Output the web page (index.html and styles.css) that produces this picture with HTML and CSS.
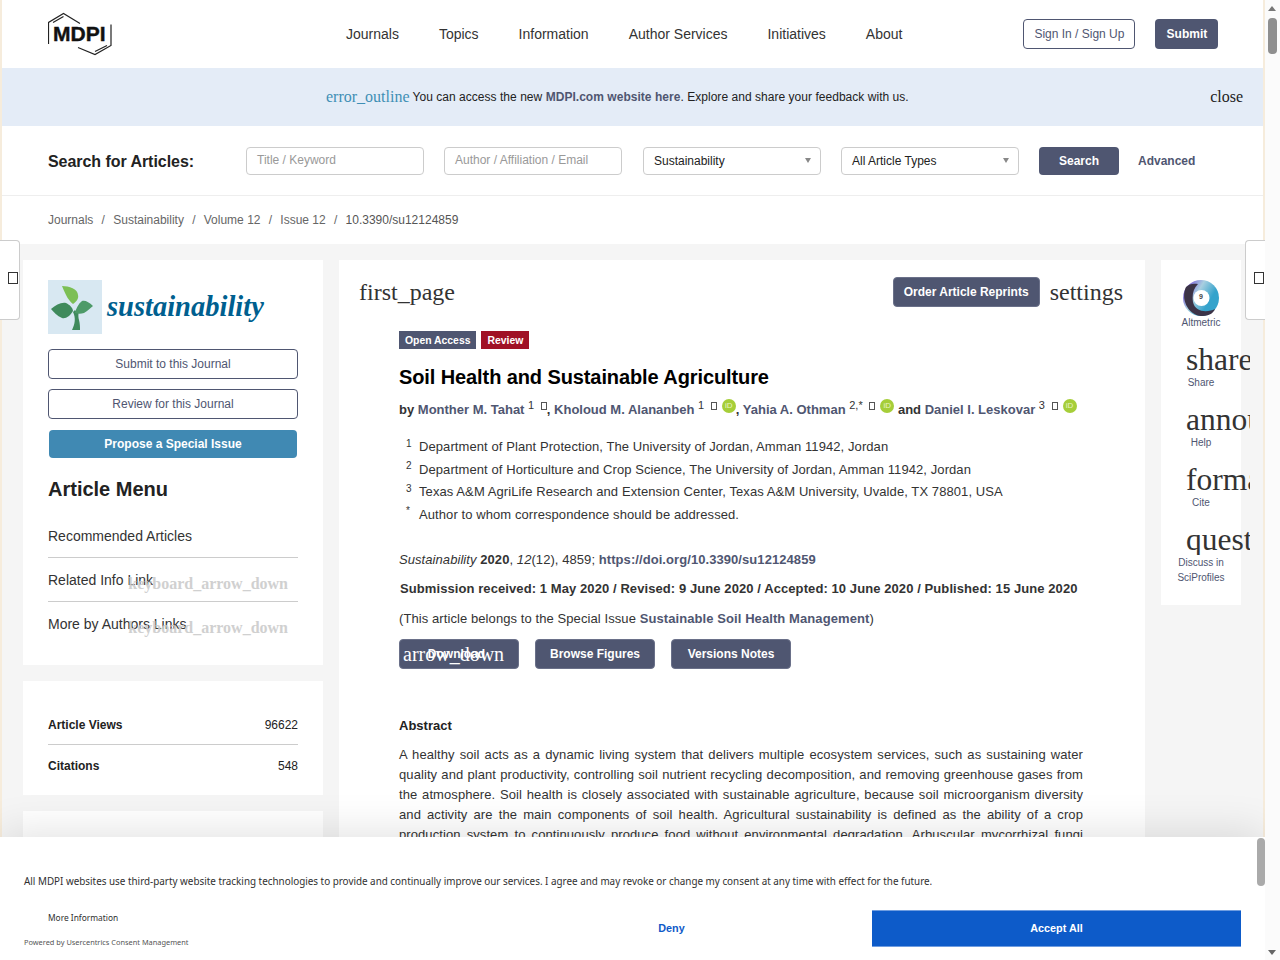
FILE: index.html
```html
<!DOCTYPE html>
<html lang="en">
<head>
    <meta charset="UTF-8">
    <title>Soil Health and Sustainable Agriculture</title>
    <link rel="stylesheet" href="styles.css">
</head>
<body>
    <div class="page">
        <header class="top-bar">
            <svg class="mdpi-logo" width="66" height="44" viewBox="0 0 66 44" aria-hidden="true">
                <path d="M0.500 32 V10.500 L15.500 1.500 L32 11.500 M5 10.500 L15.500 4.500 M63 12.500 V33.500 L47 42.500 L30 35.500 M59 33.500 L47 39.500" fill="none" stroke="#222" stroke-width="1.200"/>
                <text x="5" y="29" class="mdpi-text">MDPI</text>
            </svg>
            <nav class="main-nav">
                <a>Journals</a>
                <a>Topics</a>
                <a>Information</a>
                <a>Author Services</a>
                <a>Initiatives</a>
                <a>About</a>
            </nav>
            <a class="btn btn-outline sign-in">Sign In / Sign Up</a>
            <a class="btn btn-dark submit">Submit</a>
        </header>

        <div class="notice">
            <span class="icon-word notice-icon">error_outline</span>
            <span class="notice-text">You can access the new <b>MDPI.com website here</b>. Explore and share your feedback with us.</span>
            <span class="icon-word notice-close">close</span>
        </div>

        <form class="search-bar">
            <strong class="search-title">Search for Articles:</strong>
            <div class="field placeholder">Title / Keyword</div>
            <div class="field placeholder wide-gap">Author / Affiliation / Email</div>
            <div class="field select">Sustainability</div>
            <div class="field select">All Article Types</div>
            <a class="btn btn-dark search-btn">Search</a>
            <a class="advanced">Advanced</a>
        </form>

        <div class="breadcrumb">
            <a>Journals</a><i>/</i><a>Sustainability</a><i>/</i><a>Volume 12</a><i>/</i><a>Issue 12</a><i>/</i><span>10.3390/su12124859</span>
        </div>

        <main class="content">
            <aside class="left-col">
                <section class="card journal-card">
                    <div class="journal-logo">
                        <svg width="54" height="54" viewBox="0 0 54 54" aria-hidden="true">
                            <rect width="54" height="54" fill="#d8e8f2"/>
                            <path d="M24 50 C27 44 28 38 25 32 L27 30 C29 33 29 31 31 27 L33 27 C30 32 30 36 31 40 C32 44 32 47 32 50 Z" fill="#3f8a5c"/>
                            <path d="M14 6 C21 6 30 9 30 15 C31 19 28 22 25 24 C21 21 18 16 14 6 Z" fill="#7cbf55"/>
                            <path d="M3 29 C8 25 13 22 18 23 C22 25 25 28 25 31 C22 36 18 39 14 38 C9 36 6 32 3 29 Z" fill="#3f8a5c"/>
                            <path d="M45 26 C41 22 37 20 34 21 C30 24 28 29 27 33 C30 34 33 34 36 33 C40 31 42 28 45 26 Z" fill="#4d9a68"/>
                        </svg>
                        <span class="journal-name">sustainability</span>
                    </div>
                    <a class="btn btn-outline journal-btn">Submit to this Journal</a>
                    <a class="btn btn-outline journal-btn">Review for this Journal</a>
                    <a class="btn special-btn">Propose a Special Issue</a>
                    <h2 class="menu-title">Article Menu</h2>
                    <ul class="article-menu">
                        <li>Recommended Articles</li>
                        <li>Related Info Link<span class="icon-word menu-arrow">keyboard_arrow_down</span></li>
                        <li>More by Authors Links<span class="icon-word menu-arrow">keyboard_arrow_down</span></li>
                    </ul>
                </section>
                <section class="card stats-card">
                    <div class="stat-row"><b>Article Views</b><span>96622</span></div>
                    <div class="stat-row"><b>Citations</b><span>548</span></div>
                </section>
                <section class="card empty-card"></section>
            </aside>

            <article class="card article">
                <div class="article-tools">
                    <span class="icon-word tool-icon">first_page</span>
                    <a class="btn btn-dark reprints">Order Article Reprints</a>
                    <span class="icon-word tool-icon">settings</span>
                </div>
                <div class="article-body">
                    <div class="badges">
                        <span class="badge badge-access">Open Access</span>
                        <span class="badge badge-type">Review</span>
                    </div>
                    <h1 class="title">Soil Health and Sustainable Agriculture</h1>
                    <div class="authors">
                        by <a>Monther M. Tahat</a> <sup>1</sup> <span class="tofu"></span>, <a>Kholoud M. Alananbeh</a> <sup>1</sup> <span class="tofu"></span><span class="orcid">iD</span>, <a>Yahia A. Othman</a> <sup>2,*</sup> <span class="tofu"></span><span class="orcid">iD</span> and <a>Daniel I. Leskovar</a> <sup>3</sup> <span class="tofu"></span><span class="orcid">iD</span>
                    </div>
                    <div class="affiliations">
                        <div class="aff"><sup>1</sup><span>Department of Plant Protection, The University of Jordan, Amman 11942, Jordan</span></div>
                        <div class="aff"><sup>2</sup><span>Department of Horticulture and Crop Science, The University of Jordan, Amman 11942, Jordan</span></div>
                        <div class="aff"><sup>3</sup><span>Texas A&amp;M AgriLife Research and Extension Center, Texas A&amp;M University, Uvalde, TX 78801, USA</span></div>
                        <div class="aff"><sup>*</sup><span>Author to whom correspondence should be addressed.</span></div>
                    </div>
                    <p class="citation"><em>Sustainability</em> <b>2020</b>, <em>12</em>(12), 4859; <a>https://doi.org/10.3390/su12124859</a></p>
                    <p class="dates">Submission received: 1 May 2020 / Revised: 9 June 2020 / Accepted: 10 June 2020 / Published: 15 June 2020</p>
                    <p class="belongs">(This article belongs to the Special Issue <a>Sustainable Soil Health Management</a>)</p>
                    <div class="article-btns">
                        <a class="btn btn-dark article-btn download"><span class="icon-word download-icon">arrow_down</span>Download</a>
                        <a class="btn btn-dark article-btn">Browse Figures</a>
                        <a class="btn btn-dark article-btn">Versions Notes</a>
                    </div>
                    <h3 class="abstract-title">Abstract</h3>
                    <p class="abstract">A healthy soil acts as a dynamic living system that delivers multiple ecosystem services, such as sustaining water quality and plant productivity, controlling soil nutrient recycling decomposition, and removing greenhouse gases from the atmosphere. Soil health is closely associated with sustainable agriculture, because soil microorganism diversity and activity are the main components of soil health. Agricultural sustainability is defined as the ability of a crop production system to continuously produce food without environmental degradation. Arbuscular mycorrhizal fungi</p>
                </div>
            </article>

            <aside class="card right-col">
                <div class="side-item altmetric">
                    <svg width="36" height="36" viewBox="0 0 36 36" aria-hidden="true">
                        <defs>
                            <linearGradient id="ringTop" x1="0" y1="0" x2="1" y2="0.6">
                                <stop offset="0" stop-color="#6a2fd8"/>
                                <stop offset="0.450" stop-color="#a9cfe0"/>
                                <stop offset="0.800" stop-color="#35a3cc"/>
                            </linearGradient>
                        </defs>
                        <circle cx="18" cy="18" r="18" fill="url(#ringTop)"/>
                        <path d="M3 7 C-3 20 6 36 20 36 C27 36 31 32 32 29 C24 33 12 32 10 22 C9 15 10 9 15 4 C10 3 6 4 3 7 Z" fill="#3c3347"/>
                        <circle cx="18.500" cy="18" r="8" fill="#fff"/>
                    </svg>
                    <span class="altmetric-score">9</span>
                    <label>Altmetric</label>
                </div>
                <div class="side-item"><span class="icon-word side-icon">share</span><label>Share</label></div>
                <div class="side-item"><span class="icon-word side-icon">announcement</span><label>Help</label></div>
                <div class="side-item"><span class="icon-word side-icon">format_quote</span><label>Cite</label></div>
                <div class="side-item"><span class="icon-word side-icon">question_answer</span><label>Discuss in<br>SciProfiles</label></div>
            </aside>
        </main>
    </div>

    <div class="side-tab tab-left"><span class="tofu tofu-big"></span></div>
    <div class="side-tab tab-right"><span class="tofu tofu-big"></span></div>

    <div class="cookie">
        <p class="cookie-text">All MDPI websites use third-party website tracking technologies to provide and continually improve our services. I agree and may revoke or change my consent at any time with effect for the future.</p>
        <div class="cookie-row">
            <div class="cookie-links">
                <a class="more-info">More Information</a>
                <span class="powered">Powered by Usercentrics Consent Management</span>
            </div>
            <a class="deny">Deny</a>
            <a class="accept">Accept All</a>
        </div>
        <div class="cookie-thumb"></div>
    </div>

    <div class="scrollbar">
        <span class="arrow-up"></span>
        <span class="thumb"></span>
        <span class="arrow-down"></span>
    </div>
</body>
</html>
```

FILE: styles.css
```css
:root {
    --dark-btn: #4f5671;
    --text: #222;
    --line: #ccc;
    --grey-bg: #f5f5f5;
}

* {
    margin: 0;
    padding: 0;
    box-sizing: border-box;
}

html, body {
    height: 960px;
    overflow: hidden;
}

body {
    font-family: "Liberation Sans", Arial, sans-serif;
    font-size: 12px;
    color: var(--text);
    background: #fff;
    position: relative;
}

a {
    color: inherit;
    text-decoration: none;
}

.page {
    width: 1265px;
    height: 960px;
    padding: 0 2px;
    background: #f6ecdc;
    overflow: hidden;
}

/* words left behind by the icon font that did not load */
.icon-word {
    font-family: "Liberation Serif", "Times New Roman", serif;
    font-weight: normal;
}

.btn {
    display: flex;
    align-items: center;
    justify-content: center;
    height: 30px;
    border-radius: 4px;
    font-size: 12px;
}

.btn-dark {
    background: var(--dark-btn);
    color: #fff;
    font-weight: bold;
    border: 1px solid #6a7089;
}

.btn-outline {
    background: #fff;
    color: var(--dark-btn);
    border: 1px solid var(--dark-btn);
}

/* header */
.top-bar {
    display: flex;
    align-items: center;
    height: 68px;
    padding-left: 46px;
    background: #fff;
}

.mdpi-logo {
    flex: none;
    margin-top: -1px;
}

.mdpi-text {
    font-family: "Liberation Sans", Arial, sans-serif;
    font-weight: bold;
    font-size: 21px;
    fill: #111;
    stroke: #111;
    stroke-width: 0.400px;
}

.main-nav {
    display: flex;
    gap: 40px;
    margin-left: 232px;
    font-size: 14px;
    color: #333;
}

.sign-in {
    width: 112px;
    margin-left: 121px;
}

.submit {
    width: 63px;
    margin-left: 20px;
    border: 0;
}

/* notice */
.notice {
    display: flex;
    align-items: center;
    position: relative;
    height: 58px;
    padding-left: 324px;
    background: #e4ecf7;
}

.notice-icon {
    font-size: 16px;
    color: #3f8fb5;
    margin-right: 3px;
}

.notice-text {
    color: #222;
    letter-spacing: 0.035px;
}

.notice-text b {
    color: #4f5671;
}

.notice-close {
    margin-left: auto;
    margin-right: 20px;
    font-size: 16px;
    color: #222;
}

/* search */
.search-bar {
    display: flex;
    align-items: center;
    height: 70px;
    padding: 1px 0 0 46px;
    background: #fff;
    border-bottom: 1px solid #eee;
}

.search-title {
    width: 198px;
    padding-top: 2px;
    font-size: 16px;
    letter-spacing: -0.050px;
    color: #222;
}

.field {
    display: flex;
    align-items: center;
    flex: none;
    width: 178px;
    height: 28px;
    margin-right: 20px;
    padding-left: 10px;
    background: #fff;
    border: 1px solid var(--line);
    border-radius: 4px;
    position: relative;
}

.wide-gap {
    margin-right: 21px;
}

.placeholder {
    color: #999;
    padding-bottom: 2px;
}

.select {
    color: #222;
}

.select::after {
    content: "";
    position: absolute;
    right: 9px;
    top: 10px;
    border-left: 3.500px solid transparent;
    border-right: 3.500px solid transparent;
    border-top: 5px solid #888;
}

.search-btn {
    width: 80px;
    height: 28px;
    border: 0;
}

.advanced {
    margin-left: 19px;
    font-weight: bold;
    color: var(--dark-btn);
}

/* breadcrumb */
.breadcrumb {
    display: flex;
    align-items: center;
    height: 48px;
    padding-left: 46px;
    background: #fff;
    color: #666;
}

.breadcrumb i {
    font-style: normal;
    margin: 0 8.250px;
}

.breadcrumb span {
    color: #555;
}

/* main columns */
.content {
    display: flex;
    align-items: flex-start;
    gap: 16px;
    height: 716px;
    padding: 16px 22px 0 21px;
    background: var(--grey-bg);
}

.card {
    background: #fff;
}

.left-col {
    display: flex;
    flex-direction: column;
    gap: 16px;
    flex: none;
    width: 300px;
}

.journal-card {
    height: 405px;
    padding: 20px 25px 0;
}

.journal-logo {
    display: flex;
    align-items: center;
    gap: 5px;
    height: 54px;
    margin-bottom: 15px;
}

.journal-name {
    font-family: "Liberation Serif", "Times New Roman", serif;
    font-style: italic;
    font-weight: bold;
    font-size: 28.500px;
    color: #005f8f;
}

.journal-btn {
    margin-bottom: 10px;
}

.special-btn {
    width: 248px;
    height: 28px;
    margin: 11px 0 0 1px;
    background: #4089b3;
    color: #fff;
    font-weight: bold;
}

.menu-title {
    margin-top: 19px;
    font-size: 20px;
    line-height: 24px;
    color: #222;
}

.article-menu {
    list-style: none;
    margin-top: 13px;
    font-size: 14px;
    color: #333;
}

.article-menu li {
    display: flex;
    align-items: center;
    position: relative;
    height: 44px;
    border-bottom: 1px solid var(--line);
}

.article-menu li:last-child {
    border-bottom: 0;
}

.menu-arrow {
    position: absolute;
    right: 10px;
    top: 17px;
    font-size: 16px;
    font-weight: bold;
    color: #ccc;
    opacity: 0.9;
}

.stats-card {
    height: 114px;
    padding: 23px 25px 0;
}

.stat-row {
    display: flex;
    justify-content: space-between;
    align-items: center;
    height: 41px;
    color: #222;
}

.stat-row:first-child {
    padding-top: 2px;
    border-bottom: 1px solid var(--line);
}

.empty-card {
    height: 200px;
}

/* article */
.article {
    flex: none;
    width: 806px;
    height: 700px;
    padding: 17px 22px 0 20px;
}

.article-tools {
    display: flex;
    align-items: center;
    height: 30px;
}

.tool-icon {
    font-size: 24px;
    color: #333;
}

.reprints {
    width: 147px;
    margin-left: auto;
    margin-right: 10px;
}

.article-body {
    padding: 24px 40px 0 40px;
    font-size: 13px;
}

.badges {
    display: flex;
    gap: 5px;
    height: 18px;
}

.badge {
    display: flex;
    align-items: center;
    padding: 0 6px;
    font-size: 10.400px;
    font-weight: bold;
    color: #fff;
}

.badge-access {
    background: var(--dark-btn);
}

.badge-type {
    background: #a01125;
}

.title {
    margin-top: 16px;
    font-size: 20px;
    line-height: 24px;
    letter-spacing: -0.100px;
    color: #000;
}

.authors {
    margin-top: 10px;
    height: 24px;
    line-height: 18px;
    font-weight: bold;
    color: #333;
    white-space: nowrap;
}

.authors a {
    color: var(--dark-btn);
}

.authors sup {
    font-size: 11px;
    font-weight: normal;
    line-height: 0;
}

.tofu {
    display: inline-block;
    width: 6px;
    height: 8px;
    margin-left: 3px;
    border: 1px solid #555;
    vertical-align: 4px;
}

.orcid {
    display: inline-block;
    width: 14px;
    height: 14px;
    margin-left: 5px;
    border-radius: 50%;
    background: #a6ce39;
    color: #e8f3c6;
    font-size: 8px;
    font-weight: normal;
    line-height: 14px;
    text-align: center;
    vertical-align: 6px;
}

.affiliations {
    margin-top: 12.500px;
    letter-spacing: 0.085px;
}

.aff {
    display: flex;
    height: 22.500px;
    align-items: center;
    color: #333;
}

.aff sup {
    width: 20px;
    padding-left: 7px;
    font-size: 10px;
    line-height: 0;
    margin-top: -6px;
    letter-spacing: 0;
}

.citation {
    margin-top: 25.500px;
    line-height: 18px;
    color: #333;
    letter-spacing: 0.070px;
}

.citation a {
    font-weight: bold;
    color: var(--dark-btn);
}

.dates {
    margin-top: 11px;
    line-height: 18px;
    font-weight: bold;
    color: #333;
    padding-left: 1px;
    letter-spacing: 0.085px;
}

.belongs {
    margin-top: 12px;
    line-height: 18px;
    color: #333;
    letter-spacing: 0.085px;
}

.belongs a {
    font-weight: bold;
    color: var(--dark-btn);
}

.article-btns {
    display: flex;
    gap: 16px;
    margin-top: 11px;
}

.article-btn {
    width: 120px;
}

.download {
    position: relative;
    padding-right: 5px;
}

.download-icon {
    position: absolute;
    left: 3px;
    top: 1px;
    font-size: 20px;
    line-height: 26px;
}

.abstract-title {
    margin-top: 49px;
    font-size: 13px;
    line-height: 16px;
    color: #222;
}

.abstract {
    margin-top: 11px;
    line-height: 20px;
    text-align: justify;
    text-align-last: justify;
    color: #333;
    letter-spacing: 0.085px;
}

/* right column */
.right-col {
    display: flex;
    flex-direction: column;
    flex: none;
    width: 80px;
    height: 345px;
    padding-top: 20px;
}

.side-item {
    display: flex;
    flex-direction: column;
    align-items: center;
    position: relative;
    height: 60px;
    width: 80px;
}

.side-item label {
    font-size: 10px;
    line-height: 15px;
    text-align: center;
    color: var(--dark-btn);
}

.altmetric {
    height: 64px;
}

.altmetric label {
    margin-top: -1px;
}

.altmetric-score {
    position: absolute;
    top: 13px;
    left: 0;
    right: 0;
    text-align: center;
    font-size: 7px;
    font-weight: bold;
    color: #444;
}

.side-icon {
    display: block;
    align-self: flex-start;
    width: 64px;
    height: 31px;
    margin-left: 25px;
    overflow: hidden;
    font-size: 31.500px;
    line-height: 32px;
    color: #333;
    white-space: nowrap;
    flex: none;
}

/* tabs sticking out of the page edges */
.side-tab {
    position: absolute;
    top: 240px;
    width: 20px;
    height: 80px;
    background: #fff;
    border: 1px solid var(--line);
    display: flex;
    align-items: center;
}

.tab-left {
    left: 0;
    border-left: 0;
    border-radius: 0 4px 4px 0;
    padding-left: 8px;
}

.tab-right {
    left: 1245px;
    border-right: 0;
    border-radius: 4px 0 0 4px;
    padding-left: 8px;
}

.tofu-big {
    width: 10px;
    height: 12px;
    margin: 0 0 4px;
    vertical-align: 0;
    border-color: #333;
}

/* cookie banner */
.cookie {
    position: absolute;
    left: 0;
    bottom: 0;
    width: 1265px;
    height: 123px;
    padding: 37px 0 0 24px;
    background: #fff;
    box-shadow: 0 -4px 40px rgba(0, 0, 0, 0.12);
    font-family: "Noto Sans", "Liberation Sans", sans-serif;
    color: #303030;
}

.cookie-text {
    font-size: 9.870px;
    line-height: 14px;
}

.cookie-row {
    display: flex;
    margin-top: 22px;
}

.cookie-links {
    display: flex;
    flex-direction: column;
    width: 848px;
    padding-top: 2px;
}

.more-info {
    margin-left: 24px;
    font-size: 8.400px;
    line-height: 12px;
}

.powered {
    margin-top: 13px;
    font-size: 7.400px;
    line-height: 11px;
    color: #555;
}

.deny,
.accept {
    font-family: "Liberation Sans", Arial, sans-serif;
    font-size: 10.800px;
    font-weight: bold;
    display: flex;
    align-items: center;
    justify-content: center;
    height: 37px;
    padding-bottom: 2px;
}

.deny {
    position: absolute;
    left: 600px;
    width: 143px;
    color: #0f5ac8;
}

.accept {
    width: 369px;
    background: #0d5bc9;
    border-top: 1px solid #6f9de0;
    border-bottom: 1px solid #6f9de0;
    color: #fff;
}

.cookie-thumb {
    position: absolute;
    right: 0;
    top: 1px;
    width: 8px;
    height: 48px;
    border-radius: 4px;
    background: #aaa;
}

/* page scrollbar */
.scrollbar {
    position: absolute;
    top: 0;
    left: 1265px;
    width: 15px;
    height: 960px;
    background: #fbfbfb;
}

.thumb {
    position: absolute;
    left: 3px;
    top: 18px;
    width: 9px;
    height: 36px;
    border-radius: 4px;
    background: #8f8f8f;
}

.arrow-up,
.arrow-down {
    position: absolute;
    left: 3px;
    border-left: 4.500px solid transparent;
    border-right: 4.500px solid transparent;
}

.arrow-up {
    top: 6px;
    border-bottom: 5px solid #777;
}

.arrow-down {
    bottom: 5px;
    border-top: 5px solid #666;
}
```
